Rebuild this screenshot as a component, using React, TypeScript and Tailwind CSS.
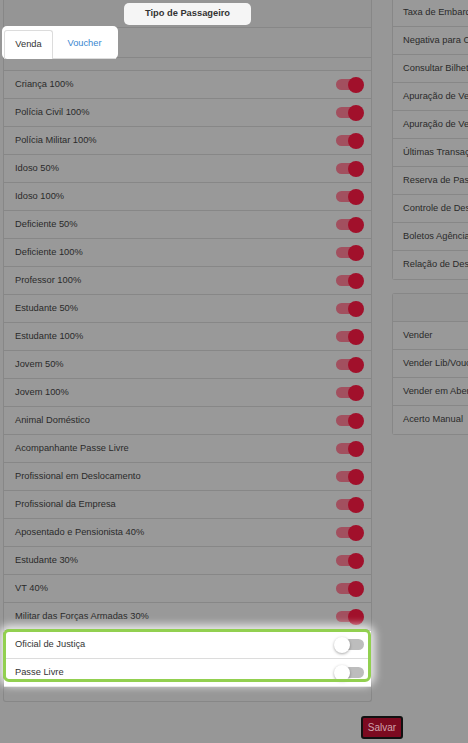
import { ReactNode } from "react";

// Passenger types: the first ones are switched on
const tiposAtivos = [
  "Criança 100%",
  "Polícia Civil 100%",
  "Polícia Militar 100%",
  "Idoso 50%",
  "Idoso 100%",
  "Deficiente 50%",
  "Deficiente 100%",
  "Professor 100%",
  "Estudante 50%",
  "Estudante 100%",
  "Jovem 50%",
  "Jovem 100%",
  "Animal Doméstico",
  "Acompanhante Passe Livre",
  "Profissional em Deslocamento",
  "Profissional da Empresa",
  "Aposentado e Pensionista 40%",
  "Estudante 30%",
  "VT 40%",
  "Militar das Forças Armadas 30%",
];

const tiposInativos = ["Oficial de Justiça", "Passe Livre"];

const menuRelatorios = [
  "Taxa de Embarque",
  "Negativa para Concessão",
  "Consultar Bilhetes",
  "Apuração de Vendas",
  "Apuração de Vendas Agência",
  "Últimas Transações",
  "Reserva de Passagens",
  "Controle de Despesas",
  "Boletos Agência",
  "Relação de Descontos",
];

const menuVendas = ["Vender", "Vender Lib/Voucher", "Vender em Aberto", "Acerto Manual"];

function ToggleOn() {
  return (
    <div className="relative w-[28px] h-[16px] flex items-center">
      <div className="w-[24px] h-[11px] rounded-full bg-[#a2505f]" />
      <div className="absolute right-0 top-0 w-[16px] h-[16px] rounded-full bg-[#a1102b]" />
    </div>
  );
}

function ToggleOff() {
  return (
    <div className="relative w-[30px] h-[16px] flex items-center">
      <div className="w-[28px] h-[11px] ml-[2px] rounded-full bg-[#bdbdbd]" />
      <div className="absolute left-0 top-0 w-[16px] h-[16px] rounded-full bg-white shadow-[0_1px_3px_rgba(0,0,0,0.35)]" />
    </div>
  );
}

function Linha({ label, children, claro }: { label: string; children: ReactNode; claro?: boolean }) {
  return (
    <div
      className={
        "h-[28px] flex items-center justify-between pl-[11px] pr-[7px] border-b " +
        (claro ? "bg-white border-[#dcdcdc] text-[#333]" : "bg-[#999999] border-[#878787] text-[#2a2a2a]")
      }
    >
      <span>{label}</span>
      {children}
    </div>
  );
}

export default function App() {
  return (
    <div
      className="w-[468px] h-[743px] overflow-hidden bg-[#979797] text-[9.3px]"
      style={{ fontFamily: '"Liberation Sans", Arial, sans-serif' }}
    >
      <div className="flex items-start">
        {/* Left column: passenger types */}
        <div className="w-[369px] ml-[3px] shrink-0">
          <div className="border-l border-r border-b border-[#878787] rounded-b-[3px] pb-[14px]">
            <div className="h-[28px] flex items-center justify-center border-b border-[#878787] bg-[#959595]">
              <div className="w-[127px] h-[22px] rounded-[5px] bg-[#f5f5f5] flex items-center justify-center font-bold text-[#333]">
                Tipo de Passageiro
              </div>
            </div>

            <div className="h-[30px] border-b border-[#878787] relative">
              <div className="absolute left-[-2px] top-[-2px] w-[116px] h-[33px] rounded-[5px] bg-white flex items-end pl-[2px]">
                <div className="w-[49px] h-[29px] border-l border-t border-r border-[#dcdcdc] rounded-t-[3px] flex items-center justify-center text-[#333]">
                  Venda
                </div>
                <div className="w-[63px] h-[29px] border-b border-[#dcdcdc] flex items-center justify-center text-[#3a86cf]">
                  Voucher
                </div>
              </div>
            </div>

            <div className="mt-[12px] border-t border-[#878787]">
              {tiposAtivos.map((t) => (
                <Linha key={t} label={t}>
                  <ToggleOn />
                </Linha>
              ))}
              <div className="relative">
                {tiposInativos.map((t) => (
                  <Linha key={t} label={t} claro>
                    <ToggleOff />
                  </Linha>
                ))}
                <div className="absolute left-[-1px] right-[0px] top-[-2px] bottom-[5px] rounded-[6px] border-[3px] border-[#92d050] shadow-[0_0_8px_4px_rgba(255,255,255,0.8)]" />
              </div>
            </div>
          </div>

          <div className="flex justify-end mt-[14px] mr-[-31px]">
            <button className="w-[42px] h-[23px] rounded-[3px] border-2 border-[#111] bg-[#7c0a20] text-[#d0a3ad] text-[10px]">
              Salvar
            </button>
          </div>
        </div>

        {/* Right column: menus */}
        <div className="ml-[20px] w-[200px] shrink-0">
          <div className="border-l border-b border-[#878787] rounded-bl-[3px] mt-[-1px]">
            {menuRelatorios.map((m, i) => (
              <div
                key={m}
                className={
                  "h-[28px] flex items-center pl-[10px] text-[#2a2a2a] bg-[#999999] whitespace-nowrap " +
                  (i < menuRelatorios.length - 1 ? "border-b border-[#878787]" : "")
                }
              >
                {m}
              </div>
            ))}
          </div>

          <div className="mt-[13px] border-l border-t border-b border-[#878787] rounded-l-[3px]">
            <div className="h-[28px] bg-[#959595] border-b border-[#878787]" />
            {menuVendas.map((m, i) => (
              <div
                key={m}
                className={
                  "h-[28px] flex items-center pl-[10px] text-[#2a2a2a] bg-[#999999] whitespace-nowrap " +
                  (i < menuVendas.length - 1 ? "border-b border-[#878787]" : "")
                }
              >
                {m}
              </div>
            ))}
          </div>
        </div>
      </div>
    </div>
  );
}
